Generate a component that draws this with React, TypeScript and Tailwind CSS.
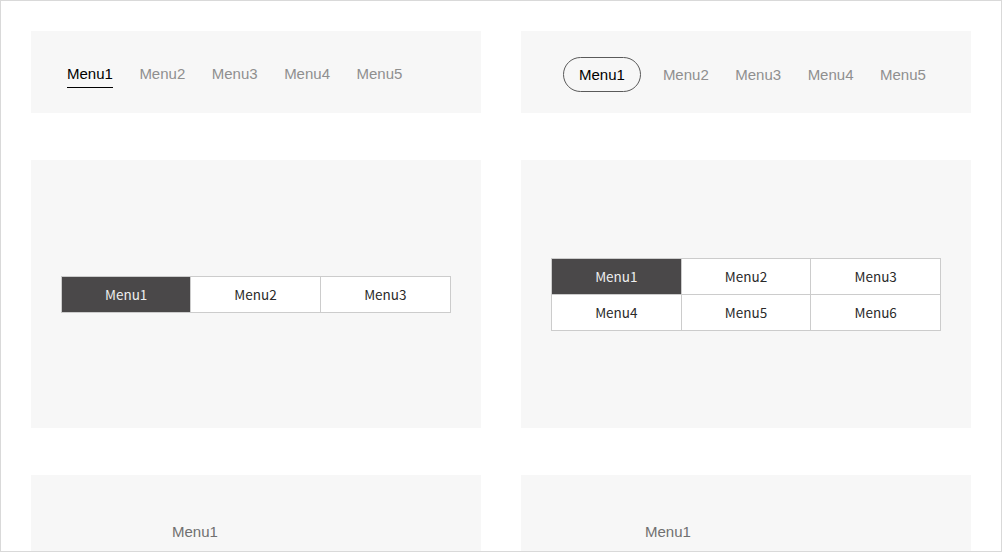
const sans = "font-['Liberation_Sans',Arial,sans-serif]";
const jp = "font-['Noto_Sans_CJK_JP','Noto_Sans',sans-serif]";

const topMenus = ['Menu1', 'Menu2', 'Menu3', 'Menu4', 'Menu5'];

function UnderlineNav() {
  return (
    <div className={`bg-[#f7f7f7] flex items-start pt-[34px] pl-9 gap-[26.5px] text-[15px] leading-[17px] ${sans}`}>
      {topMenus.map((m, i) => (
        <span
          key={m}
          className={
            i === 0
              ? 'pb-[5px] border-b border-black text-black'
              : 'pb-[5px] border-b border-transparent text-[#8f8f8f]'
          }
        >
          {m}
        </span>
      ))}
    </div>
  );
}

function PillNav() {
  return (
    <div className={`bg-[#f7f7f7] flex items-start pt-[26px] pl-[42px] text-[15px] leading-[17px] ${sans}`}>
      <span className="h-[35px] flex items-center px-[15px] rounded-full border border-[#5a5a5a] text-black mr-[22px]">
        Menu1
      </span>
      <div className="flex gap-[26.5px]">
        {topMenus.slice(1).map((m) => (
          <span key={m} className="h-[35px] flex items-center text-[#8f8f8f]">
            {m}
          </span>
        ))}
      </div>
    </div>
  );
}

function Cell({ label, active }: { label: string; active?: boolean }) {
  return (
    <div
      className={
        active
          ? 'h-[35px] flex items-center justify-center bg-[#4a4849] text-[#eeeeee]'
          : 'h-[35px] flex items-center justify-center bg-white text-[#2a2a2a]'
      }
    >
      {label}
    </div>
  );
}

function TabBar() {
  return (
    <div className="bg-[#f7f7f7] flex items-center px-[30px]">
      <div className={`w-[390px] grid grid-cols-3 border border-[#cccccc] divide-x divide-[#cccccc] text-[13.5px] ${jp}`}>
        <Cell label="Menu1" active />
        <Cell label="Menu2" />
        <Cell label="Menu3" />
      </div>
    </div>
  );
}

function TabGrid() {
  const items = ['Menu1', 'Menu2', 'Menu3', 'Menu4', 'Menu5', 'Menu6'];
  return (
    <div className="bg-[#f7f7f7] flex items-center px-[30px]">
      <div className={`w-[390px] grid grid-cols-3 gap-px bg-[#cccccc] border border-[#cccccc] text-[13.5px] ${jp}`}>
        {items.map((m, i) => (
          <Cell key={m} label={m} active={i === 0} />
        ))}
      </div>
    </div>
  );
}

export default function App() {
  return (
    <div className="w-[1002px] h-[552px] overflow-hidden bg-white border border-[#d9d9d9] p-[30px]">
      <div className="grid grid-cols-[450px_450px] grid-rows-[82px_268px_200px] gap-x-10 gap-y-[47px]">
        <UnderlineNav />
        <PillNav />
        <TabBar />
        <TabGrid />
        <div className={`bg-[#f7f7f7] pt-[48px] pl-[141px] text-[15px] leading-[17px] text-[#707070] ${sans}`}>
          Menu1
        </div>
        <div className={`bg-[#f7f7f7] pt-[48px] pl-[124px] text-[15px] leading-[17px] text-[#707070] ${sans}`}>
          Menu1
        </div>
      </div>
    </div>
  );
}
